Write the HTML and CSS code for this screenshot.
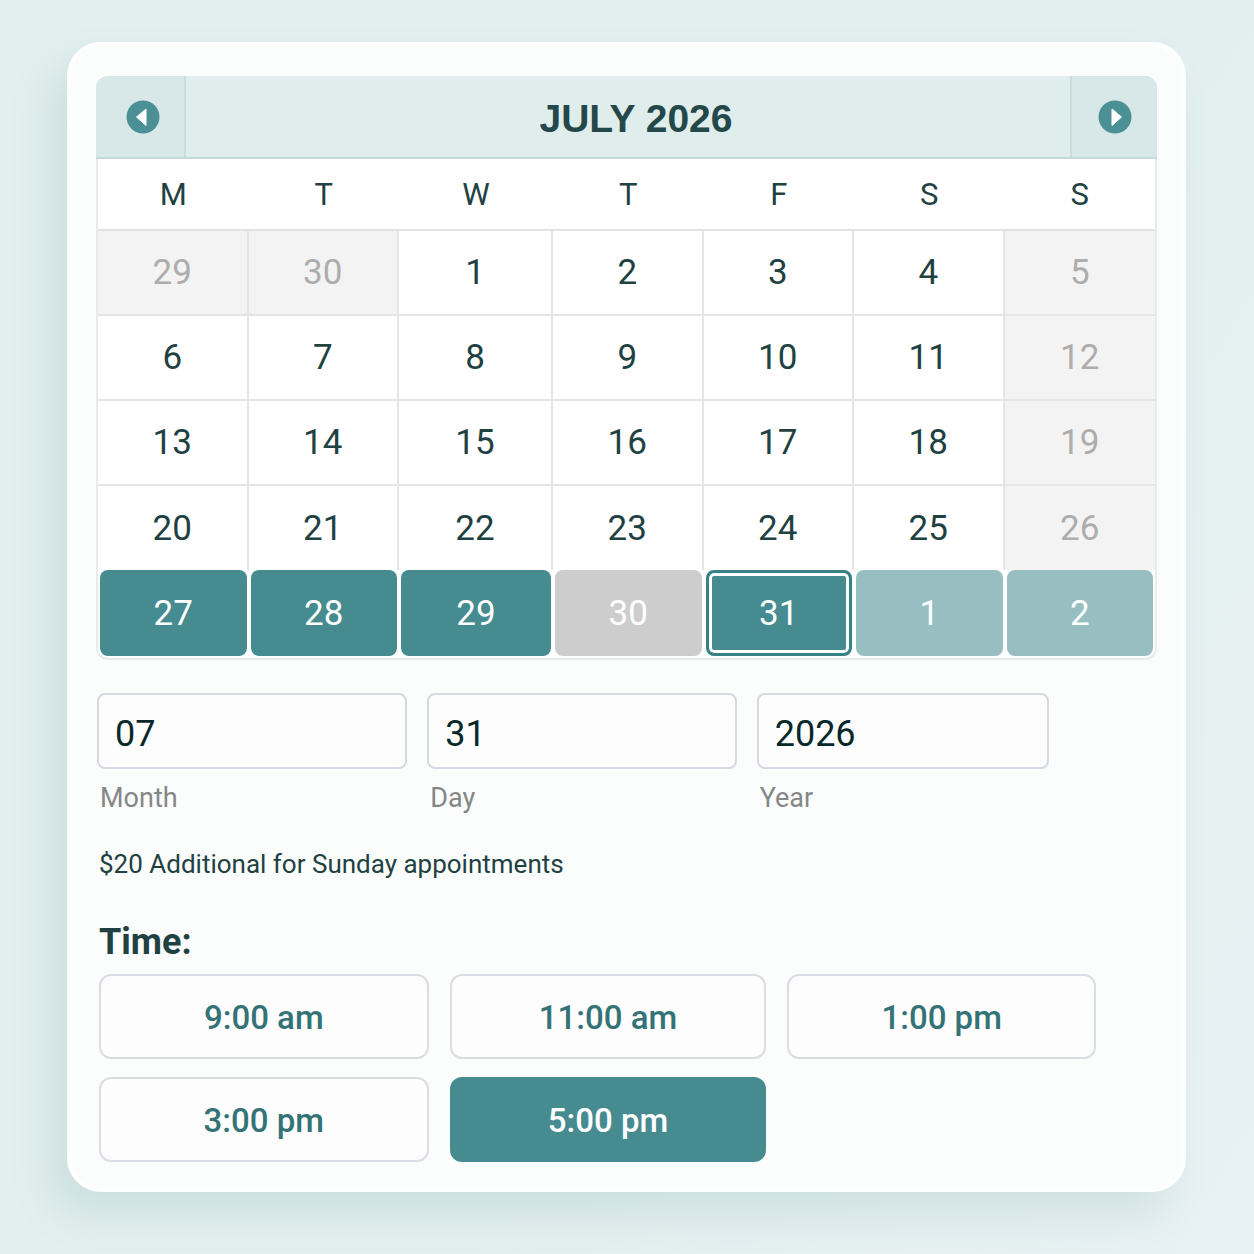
FILE: index.html
```html
<!DOCTYPE html>
<html lang="en">
<head>
    <meta charset="UTF-8">
    <meta name="viewport" content="width=device-width, initial-scale=1.0">
    <title>Book an appointment</title>
    <link rel="stylesheet" href="styles.css">
</head>
<body>

<main class="booking">
    <div class="calendar">
        <div class="calendar-header">
            <button class="nav-btn prev" type="button" aria-label="Previous month">
                <svg class="nav-icon" viewBox="0 0 34 34"><circle cx="17" cy="17" r="16.5"/><path d="M20 9v16.500L10.500 17z"/></svg>
            </button>
            <h1 class="calendar-title">JULY 2026</h1>
            <button class="nav-btn next" type="button" aria-label="Next month">
                <svg class="nav-icon" viewBox="0 0 34 34"><circle cx="17" cy="17" r="16.5"/><path d="M14 9v16.500L23.500 17z"/></svg>
            </button>
        </div>

        <table class="days">
            <colgroup>
                <col><col><col class="midweek"><col><col><col><col>
            </colgroup>
            <thead>
                <tr><th>M</th><th>T</th><th>W</th><th>T</th><th>F</th><th>S</th><th>S</th></tr>
            </thead>
            <tbody>
                <tr>
                    <td><button class="day disabled" disabled>29</button></td>
                    <td><button class="day disabled" disabled>30</button></td>
                    <td><button class="day">1</button></td>
                    <td><button class="day">2</button></td>
                    <td><button class="day">3</button></td>
                    <td><button class="day">4</button></td>
                    <td><button class="day disabled" disabled>5</button></td>
                </tr>
                <tr>
                    <td><button class="day">6</button></td>
                    <td><button class="day">7</button></td>
                    <td><button class="day">8</button></td>
                    <td><button class="day">9</button></td>
                    <td><button class="day">10</button></td>
                    <td><button class="day">11</button></td>
                    <td><button class="day disabled" disabled>12</button></td>
                </tr>
                <tr>
                    <td><button class="day">13</button></td>
                    <td><button class="day">14</button></td>
                    <td><button class="day">15</button></td>
                    <td><button class="day">16</button></td>
                    <td><button class="day">17</button></td>
                    <td><button class="day">18</button></td>
                    <td><button class="day disabled" disabled>19</button></td>
                </tr>
                <tr class="last-plain">
                    <td><button class="day">20</button></td>
                    <td><button class="day">21</button></td>
                    <td><button class="day">22</button></td>
                    <td><button class="day">23</button></td>
                    <td><button class="day">24</button></td>
                    <td><button class="day">25</button></td>
                    <td><button class="day disabled" disabled>26</button></td>
                </tr>
                <!-- bookable week -->
                <tr class="open-week">
                    <td><button class="day open">27</button></td>
                    <td><button class="day open">28</button></td>
                    <td><button class="day open">29</button></td>
                    <td><button class="day full" disabled>30</button></td>
                    <td><button class="day open selected">31</button></td>
                    <td><button class="day next-month">1</button></td>
                    <td><button class="day next-month">2</button></td>
                </tr>
            </tbody>
        </table>
    </div>

    <div class="date-fields">
        <div class="field">
            <input type="text" id="month" value="07">
            <label for="month">Month</label>
        </div>
        <div class="field">
            <input type="text" id="day" value="31">
            <label for="day">Day</label>
        </div>
        <div class="field">
            <input type="text" id="year" value="2026">
            <label for="year">Year</label>
        </div>
    </div>

    <p class="note">$20 Additional for Sunday appointments</p>

    <h2 class="time-title">Time:</h2>
    <div class="times">
        <button class="time" type="button">9:00 am</button>
        <button class="time" type="button">11:00 am</button>
        <button class="time" type="button">1:00 pm</button>
        <button class="time" type="button">3:00 pm</button>
        <button class="time active" type="button">5:00 pm</button>
    </div>
</main>

<script>
    // pick a time
    document.querySelectorAll(".time").forEach(button => {
        button.addEventListener("click", function() {
            document.querySelectorAll(".time").forEach(btn => btn.classList.remove("active"));
            this.classList.add("active");
        });
    });

    // pick a day
    document.querySelectorAll(".day.open").forEach(button => {
        button.addEventListener("click", function() {
            document.querySelectorAll(".day.open").forEach(btn => btn.classList.remove("selected"));
            this.classList.add("selected");
            document.getElementById("day").value = this.textContent;
        });
    });
</script>

</body>
</html>
```

FILE: styles.css
```css
* {
    box-sizing: border-box;
}
body {
    margin: 0;
    padding: 42px 68px 62px 67px;
    min-height: 100vh;
    font-family: Roboto, "Liberation Sans", sans-serif;
    color: #1f4142;
    background: linear-gradient(120deg, #e3efef, #e3efef 60%, #e8f1f3);
}
button, input {
    font-family: inherit;
    color: inherit;
}
button {
    cursor: pointer;
}
.booking {
    padding: 30px 25px 26px 25px;
    background: #fbfcfc;
    border: 4px solid #ffffff;
    border-radius: 34px;
    box-shadow: -18px 22px 40px rgba(70, 135, 135, 0.14);
}

/* Calendar */
.calendar-header {
    display: flex;
    height: 83px;
    background: #e0eded;
    border-bottom: 2px solid #c6d9d9;
    border-radius: 12px 12px 0 0;
    overflow: hidden;
}
.nav-btn {
    display: flex;
    align-items: center;
    justify-content: center;
    width: 90px;
    padding: 0;
    border: none;
    background: #d8e7e7;
}
.prev {
    border-right: 2px solid #cbdcdc;
    padding-left: 6px;
}
.next {
    width: 87px;
    border-left: 2px solid #cbdcdc;
}
.nav-icon {
    width: 34px;
    height: 34px;
    fill: #4a9094;
}
.nav-icon path {
    fill: #ffffff;
    stroke: #ffffff;
    stroke-width: 1;
    stroke-linejoin: round;
}
.calendar-title {
    flex: 1;
    margin: 0;
    padding-left: 16px;
    font-family: "Liberation Sans", Arial, sans-serif;
    font-size: 39px;
    line-height: 86px;
    text-align: center;
    color: #24484a;
}
.days {
    width: 100%;
    table-layout: fixed;
    border: 2px solid #e9ebeb;
    border-top: none;
    border-spacing: 0;
    border-radius: 0 0 12px 12px;
    background: #ffffff;
}
.midweek {
    width: 154px;
}
.days th {
    height: 72px;
    padding: 0;
    border-bottom: 2px solid #e1e3e3;
    font-size: 31px;
    font-weight: 400;
}
.days td {
    height: 85px;
    padding: 0;
    border-right: 2px solid #e4e5e5;
    border-bottom: 2px solid #e4e5e5;
}
.days td:last-child {
    border-right: none;
}
.days .last-plain td {
    height: 84px;
    border-bottom: none;
}
.day {
    display: block;
    width: 100%;
    height: 83px;
    padding: 0;
    border: none;
    background: transparent;
    font-size: 35px;
}
.last-plain .day {
    height: 84px;
}
.disabled {
    background: #f3f3f3;
    color: #adadad;
}
.days .open-week td {
    height: 88px;
    padding: 0 2px 2px;
    border: none;
}
.open-week .day {
    height: 86px;
    border-radius: 8px;
    color: #ffffff;
}
.open {
    background: #468b8f;
}
.full {
    background: #cdcdcd;
}
.next-month {
    background: #97bec1;
}
.selected {
    border: 3px solid #388185;
    box-shadow: inset 0 0 0 3px #ffffff;
}

/* Month / day / year */
.date-fields {
    display: grid;
    grid-template-columns: 310fr 309fr 292fr;
    gap: 20px;
    margin-top: 33px;
    padding: 0 108px 0 1px;
}
.field input {
    display: block;
    width: 100%;
    height: 76px;
    padding: 6px 16px 0;
    border: 2px solid #d6d9e2;
    border-radius: 8px;
    background: #fdfdfd;
    font-size: 36px;
    color: #07282a;
}
.field label {
    display: block;
    margin-top: 11px;
    padding-left: 3px;
    font-size: 27px;
    line-height: 36px;
    color: #858787;
}

.note {
    margin: 30px 0 0;
    padding-left: 3px;
    font-size: 26px;
    line-height: 36px;
}

/* Times */
.time-title {
    margin: 36px 0 0;
    padding-left: 3px;
    font-size: 36px;
    line-height: 48px;
}
.times {
    display: grid;
    grid-template-columns: 330fr 317fr 309fr;
    gap: 18px 21px;
    margin-top: 8px;
    padding: 0 61px 0 3px;
}
.time {
    height: 85px;
    padding: 2px 0 0;
    border: 2px solid #dadde4;
    border-radius: 12px;
    background: #fdfdfe;
    font-size: 33px;
    font-weight: 500;
    color: #337376;
}
.time.active {
    border-color: #468b8f;
    background: #468b8f;
    color: #ffffff;
}
```
